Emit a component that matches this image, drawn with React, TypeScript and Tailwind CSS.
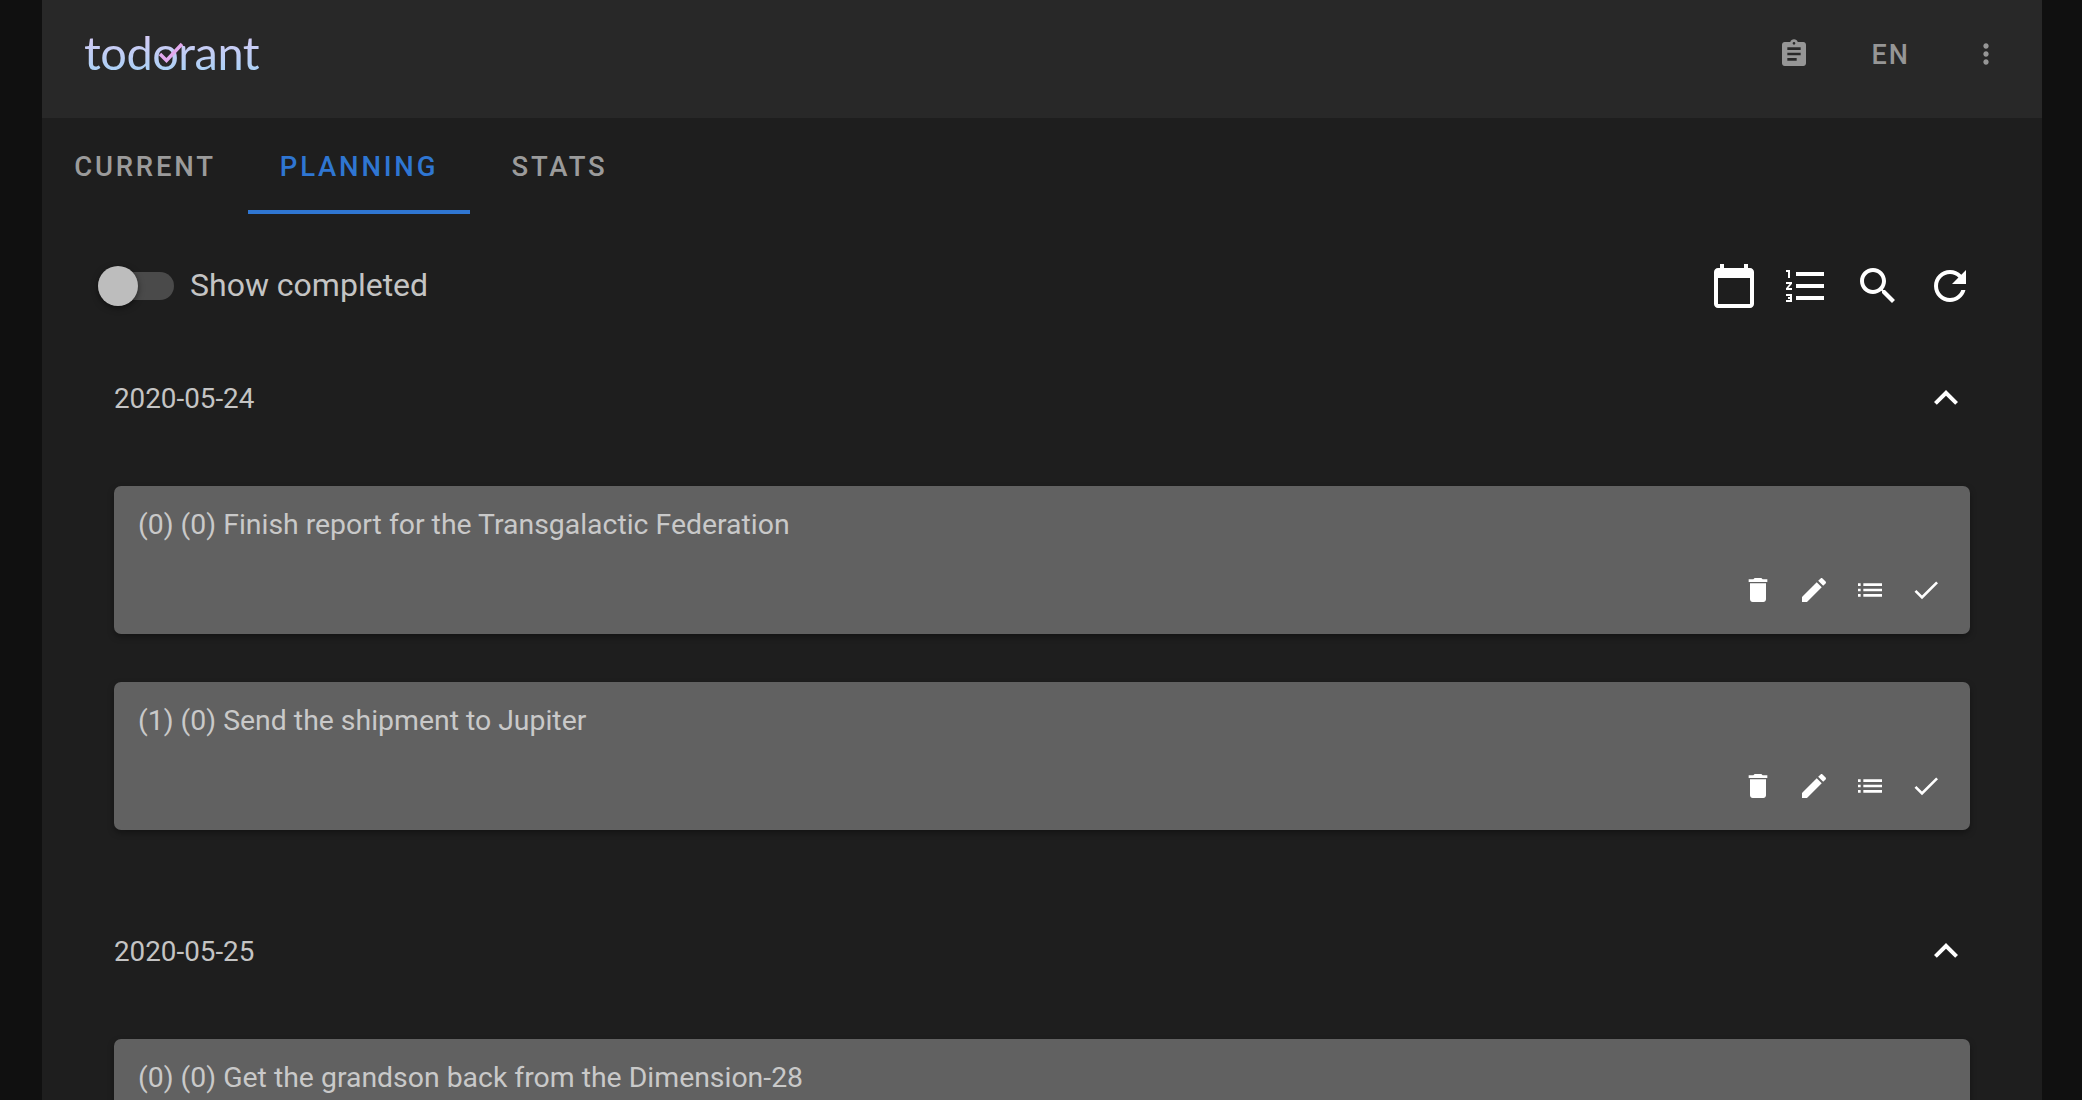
import type { JSX } from 'react'

const ICONS = {
  assignment:
    'M19 3h-4.18C14.4 1.84 13.3 1 12 1c-1.3 0-2.4.84-2.82 2H5c-1.1 0-2 .9-2 2v14c0 1.1.9 2 2 2h14c1.1 0 2-.9 2-2V5c0-1.1-.9-2-2-2zm-7 0c.55 0 1 .45 1 1s-.45 1-1 1-1-.45-1-1 .45-1 1-1zm2 14H7v-2h7v2zm3-4H7v-2h10v2zm0-4H7V7h10v2z',
  moreVert:
    'M12 8c1.1 0 2-.9 2-2s-.9-2-2-2-2 .9-2 2 .9 2 2 2zm0 2c-1.1 0-2 .9-2 2s.9 2 2 2 2-.9 2-2-.9-2-2-2zm0 6c-1.1 0-2 .9-2 2s.9 2 2 2 2-.9 2-2-.9-2-2-2z',
  calendar:
    'M20 3h-1V1h-2v2H7V1H5v2H4c-1.1 0-2 .9-2 2v16c0 1.1.9 2 2 2h16c1.1 0 2-.9 2-2V5c0-1.1-.9-2-2-2zm0 18H4V8h16v13z',
  numbered:
    'M2 17h2v.5H3v1h1v.5H2v1h3v-4H2v1zm1-9h1V4H2v1h1v3zm-1 3h1.8L2 13.1v.9h3v-1H3.2L5 10.9V10H2v1zm5-6v2h14V5H7zm0 14h14v-2H7v2zm0-6h14v-2H7v2z',
  search:
    'M15.5 14h-.79l-.28-.27C15.41 12.59 16 11.11 16 9.5 16 5.91 13.09 3 9.5 3S3 5.91 3 9.5 5.91 16 9.5 16c1.61 0 3.09-.59 4.23-1.57l.27.28v.79l5 4.99L20.49 19l-4.99-5zm-6 0C7.01 14 5 11.99 5 9.5S7.01 5 9.5 5 14 7.01 14 9.5 11.99 14 9.5 14z',
  refresh:
    'M17.65 6.35C16.2 4.9 14.21 4 12 4c-4.42 0-7.99 3.58-7.99 8s3.57 8 7.99 8c3.73 0 6.84-2.55 7.73-6h-2.08c-.82 2.33-3.04 4-5.65 4-3.31 0-6-2.69-6-6s2.69-6 6-6c1.66 0 3.14.69 4.22 1.78L13 11h7V4l-2.35 2.35z',
  expandLess: 'M12 8l-6 6 1.41 1.41L12 10.83l4.59 4.58L18 14z',
  remove: 'M6 19c0 1.1.9 2 2 2h8c1.1 0 2-.9 2-2V7H6v12zM19 4h-3.5l-1-1h-5l-1 1H5v2h14V4z',
  edit: 'M3 17.25V21h3.75L17.81 9.94l-3.75-3.75L3 17.25zM20.71 7.04c.39-.39.39-1.02 0-1.41l-2.34-2.34c-.39-.39-1.02-.39-1.41 0l-1.83 1.83 3.75 3.75 1.83-1.83z',
  list: 'M3 13h2v-2H3v2zm0 4h2v-2H3v2zm0-8h2V7H3v2zm4 4h14v-2H7v2zm0 4h14v-2H7v2zM7 7v2h14V7H7z',
  done: 'M9 16.2L4.8 12l-1.4 1.4L9 19 21 7l-1.4-1.4L9 16.2z',
}

function Icon({ d, className }: { d: string; className: string }): JSX.Element {
  return (
    <svg viewBox="0 0 24 24" fill="currentColor" className={className}>
      <path d={d} />
    </svg>
  )
}

function TodoCard({ text, clipped }: { text: string; clipped?: boolean }): JSX.Element {
  return (
    <div className="rounded-[7px] bg-[#616161] pl-6 pr-7 pt-[23px] pb-[28px] shadow-[0_3px_6px_rgba(0,0,0,0.35)]">
      <p className="text-[28.4px] leading-[32px] text-[#c9c9c9]">{text}</p>
      {!clipped && (
        <div className="mt-[33px] flex justify-end gap-6 text-white">
          <Icon d={ICONS.remove} className="size-8" />
          <Icon d={ICONS.edit} className="size-8" />
          <Icon d={ICONS.list} className="size-8" />
          <Icon d={ICONS.done} className="size-8" />
        </div>
      )}
    </div>
  )
}

function DateHeader({ date }: { date: string }): JSX.Element {
  return (
    <div className="flex h-6 items-center justify-between">
      <span className="pt-0.5 text-[27.8px] text-[#c4c4c4]">{date}</span>
      <Icon d={ICONS.expandLess} className="size-12 text-white" />
    </div>
  )
}

function Logo(): JSX.Element {
  return (
    <div className="relative mb-[5px]">
      <span
        className="bg-gradient-to-b from-[#e0c8f4] to-[#9fd2f6] bg-clip-text text-[47px] leading-[56px] tracking-[-0.5px] text-transparent blur-[0.6px]"
        style={{ fontFamily: 'Lato, sans-serif' }}
      >
        todorant
      </span>
      <svg viewBox="0 0 40 24" className="absolute left-[70px] top-[16px] h-6 w-10 text-[#e3a9ee]">
        <path d="M6 14l6.5 6.5L28 4" fill="none" stroke="currentColor" strokeWidth="3.5" />
      </svg>
    </div>
  )
}

export default function App(): JSX.Element {
  return (
    <div
      className="h-[1100px] overflow-hidden bg-[#101010] pl-[42px]"
      style={{ fontFamily: 'Roboto, sans-serif' }}
    >
      <div className="h-full w-[2000px] bg-[#1e1e1e]">
        <header className="flex h-[118px] items-center bg-[#282828] pb-[10px] pl-[42px] pr-[40px]">
          <Logo />
          <div className="ml-auto flex items-center text-[#969696]">
            <Icon d={ICONS.assignment} className="size-8" />
            <span className="ml-[62px] pt-0.5 text-[27px] font-medium tracking-[2px]">EN</span>
            <Icon d={ICONS.moreVert} className="ml-[60px] size-8" />
          </div>
        </header>

        <nav className="flex h-[96px] text-[27.5px] font-medium uppercase tracking-[2.8px]">
          <div className="flex w-[206px] items-center justify-center pt-0.5 text-[#9b9b9b]">Current</div>
          <div className="flex w-[222px] items-center justify-center border-b-4 border-[#2f76d2] pt-1.5 text-[#2f76d2]">
            Planning
          </div>
          <div className="ml-[10px] flex w-[159px] items-center justify-center pt-0.5 text-[#9b9b9b]">Stats</div>
        </nav>

        <div className="flex items-center justify-between pt-[48px] pl-[56px] pr-[68px]">
          <div className="flex items-center">
            <div className="relative h-7 w-[76px] rounded-full bg-[#4a4a4a]">
              <div className="absolute left-0 top-[-6px] size-10 rounded-full bg-[#bdbdbd] shadow-[0_2px_6px_rgba(0,0,0,0.5)]" />
            </div>
            <span className="mb-0.5 ml-4 text-[32px] leading-[40px] text-[#c4c4c4]">Show completed</span>
          </div>
          <div className="flex gap-6 text-white">
            <Icon d={ICONS.calendar} className="size-12" />
            <Icon d={ICONS.numbered} className="size-12" />
            <Icon d={ICONS.search} className="size-12" />
            <Icon d={ICONS.refresh} className="size-12" />
          </div>
        </div>

        <div className="px-[72px] pt-[76px]">
          <DateHeader date="2020-05-24" />
          <div className="mt-[76px] flex flex-col gap-[48px]">
            <TodoCard text="(0) (0) Finish report for the Transgalactic Federation" />
            <TodoCard text="(1) (0) Send the shipment to Jupiter" />
          </div>
          <div className="mt-[109px]">
            <DateHeader date="2020-05-25" />
          </div>
          <div className="mt-[76px]">
            <TodoCard text="(0) (0) Get the grandson back from the Dimension-28" clipped />
          </div>
        </div>
      </div>
    </div>
  )
}
